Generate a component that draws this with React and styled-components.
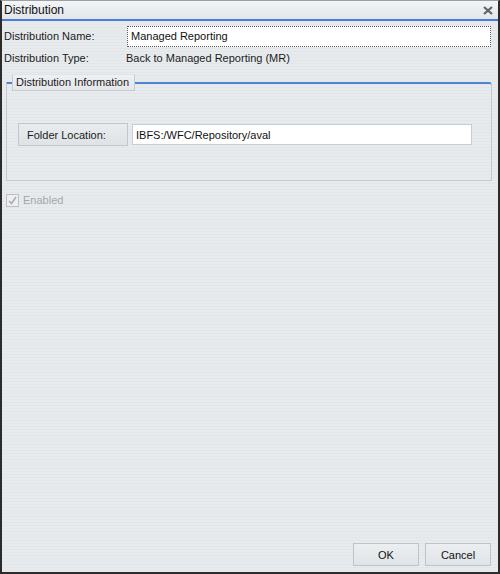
import React from "react";
import styled, { createGlobalStyle } from "styled-components";

const Global = createGlobalStyle`
  html, body { margin: 0; padding: 0; background: #ffffff; }
  body { font-family: "Liberation Sans", Arial, sans-serif; font-size: 11px; color: #1b1b1b; }
  * { box-sizing: border-box; }
`;

const Window = styled.div`
  width: 500px;
  height: 574px;
  display: flex;
  flex-direction: column;
  border-left: 2px solid #2b2b2b;
  border-right: 2px solid #2b2b2b;
  border-bottom: 2px solid #2b2b2b;
  border-top: 1px solid #9aa0a6;
  background: repeating-linear-gradient(
    to bottom,
    #e8ebee 0px,
    #e8ebee 2px,
    #e3e6e9 2px,
    #e3e6e9 3px
  );
`;

const TitleBar = styled.div`
  height: 20px;
  flex: none;
  display: flex;
  align-items: center;
  justify-content: space-between;
  padding: 0 5px 0 2px;
  background: linear-gradient(to bottom, #f3f5f7, #e2e6ea);
  border-bottom: 2px solid #4a7fd6;
`;

const TitleText = styled.span`
  font-size: 12px;
  color: #111;
`;

const CloseIcon = styled.svg`
  width: 10px;
  height: 9px;
  display: block;
`;

const Body = styled.div`
  flex: 1;
  display: flex;
  flex-direction: column;
  padding: 4px 7px 0 2px;
`;

const Row = styled.div`
  display: flex;
  align-items: center;
  height: ${(p) => p.$h || 22}px;
  margin-left: ${(p) => p.$ml || 0}px;
`;

const Label = styled.span`
  width: ${(p) => p.$w}px;
  flex: none;
  white-space: nowrap;
`;

const TextInput = styled.div`
  width: ${(p) => p.$w}px;
  height: 21px;
  flex: none;
  display: flex;
  align-items: center;
  padding-left: 3px;
  background: #ffffff;
  border: 1px ${(p) => (p.$focus ? "dotted #555" : "solid #c9ccd0")};
  white-space: nowrap;
  color: #111;
`;

const FieldSet = styled.fieldset`
  margin: 5px 0 0 2px;
  padding: 32px 0 0 0;
  height: 107px;
  width: 486px;
  border: 1px solid #c5c9cd;
  border-top: 2px solid #4f84d2;
  border-top-right-radius: 3px;
`;

const Legend = styled.legend`
  margin-left: 5px;
  padding: 0 5px 0 3px;
  height: 17px;
  line-height: 15px;
  font-size: 11px;
  color: #1a1a1a;
  background: linear-gradient(to bottom, #eef0f2, #e4e7ea);
  border: 1px solid #c8ccd0;
  border-top-color: #e0e3e6;
`;

const LabelButton = styled.div`
  width: 110px;
  height: 23px;
  flex: none;
  display: flex;
  align-items: center;
  padding-left: 8px;
  margin-right: 4px;
  background: linear-gradient(to bottom, #e9ecef, #dfe3e6);
  border: 1px solid #c3c7cb;
  white-space: nowrap;
`;

const CheckRow = styled.label`
  display: flex;
  align-items: center;
  margin: 12px 0 0 2px;
  color: #a3a7ab;
  height: 14px;
`;

const CheckBox = styled.span`
  width: 13px;
  height: 13px;
  margin-right: 4px;
  display: flex;
  align-items: center;
  justify-content: center;
  border: 1px solid #bcc0c4;
  background: #eceef0;
`;

const Footer = styled.div`
  margin-top: auto;
  display: flex;
  justify-content: flex-end;
  gap: 6px;
  padding-bottom: 6px;
`;

const Button = styled.button`
  width: 66px;
  height: 23px;
  font-family: "Liberation Sans", Arial, sans-serif;
  font-size: 11px;
  color: #111;
  background: linear-gradient(to bottom, #eceff1, #e0e4e7);
  border: 1px solid #bfc3c7;
  padding: 0;
`;

export default function App() {
  return (
    <>
      <Global />
      <Window>
        <TitleBar>
          <TitleText>Distribution</TitleText>
          <CloseIcon viewBox="0 0 10 9">
            <path d="M1 1 L9 8 M9 1 L1 8" stroke="#5f6367" strokeWidth="2.2" />
          </CloseIcon>
        </TitleBar>
        <Body>
          <Row>
            <Label $w={123}>Distribution Name:</Label>
            <TextInput $w={364} $focus>Managed Reporting</TextInput>
          </Row>
          <Row $h={22}>
            <Label $w={122}>Distribution Type:</Label>
            <span>Back to Managed Reporting (MR)</span>
          </Row>
          <FieldSet>
            <Legend>Distribution Information</Legend>
            <Row $h={23} $ml={11}>
              <LabelButton>Folder Location:</LabelButton>
              <TextInput $w={340}>IBFS:/WFC/Repository/aval</TextInput>
            </Row>
          </FieldSet>
          <CheckRow>
            <CheckBox>
              <svg width="9" height="9" viewBox="0 0 9 9">
                <path d="M1 5 L3.5 7.5 L8 1" fill="none" stroke="#a8acb0" strokeWidth="1.5" />
              </svg>
            </CheckBox>
            Enabled
          </CheckRow>
          <Footer>
            <Button>OK</Button>
            <Button>Cancel</Button>
          </Footer>
        </Body>
      </Window>
    </>
  );
}
